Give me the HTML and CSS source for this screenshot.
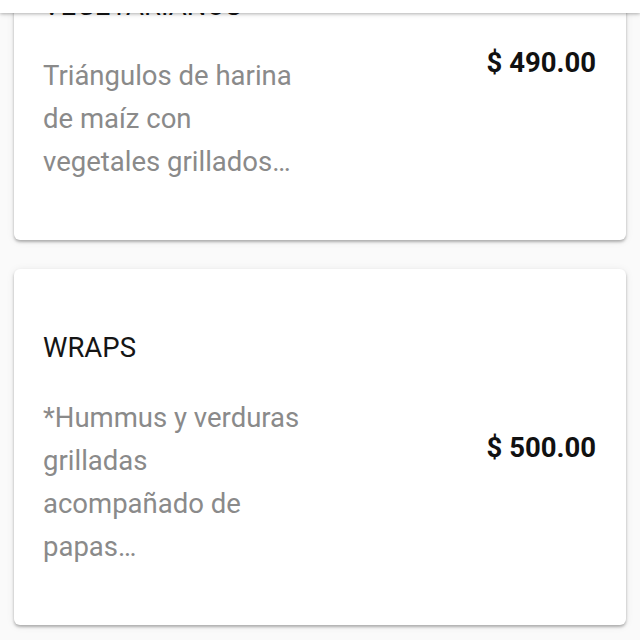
FILE: index.html
```html
<!DOCTYPE html>
<html lang="es">
<head>
    <meta charset="UTF-8">
    <meta name="viewport" content="width=device-width, initial-scale=1.0">
    <title>Menú</title>
    <link rel="stylesheet" href="styles.css">
</head>
<body>
    <!-- barra superior (solo se ve el borde inferior) -->
    <div class="app-bar"></div>

    <div class="menu-list">
        <div class="menu-card">
            <div class="menu-info">
                <div class="menu-title">NACHOS VEGETARIANOS</div>
                <div class="menu-desc">Triángulos de harina de maíz con vegetales grillados…</div>
            </div>
            <div class="menu-price">$ 490.00</div>
        </div>

        <div class="menu-card">
            <div class="menu-info">
                <div class="menu-title">WRAPS</div>
                <div class="menu-desc">*Hummus y verduras grilladas acompañado de papas…</div>
            </div>
            <div class="menu-price">$ 500.00</div>
        </div>
    </div>
</body>
</html>
```

FILE: styles.css
```css
/* reset */
html, body {
    margin: 0;
    padding: 0;
    width: 100%;
    height: 100%;
    overflow: hidden;
    box-sizing: border-box;
}

body {
    background-color: #fafafa;
    font-family: Roboto, "Noto Sans", "Liberation Sans", sans-serif;
}

/* barra fija arriba */
.app-bar {
    position: fixed;
    top: 0;
    left: 0;
    right: 0;
    height: 13px;
    background: #fff;
    box-shadow: 0 1px 3px rgba(0, 0, 0, 0.25), 0 2px 6px rgba(0, 0, 0, 0.08);
    z-index: 10;
}

/* lista desplazada (scroll) */
.menu-list {
    display: flex;
    flex-direction: column;
    gap: 29px;
    margin-top: -116px;
    padding: 0 14px;
}

.menu-card {
    display: flex;
    align-items: center;
    justify-content: space-between;
    height: 356px;
    padding: 0 30px 0 29px;
    background: #fff;
    border-radius: 6px;
    box-sizing: border-box;
    box-shadow: 0 2px 3px rgba(0, 0, 0, 0.28), 0 1px 8px rgba(0, 0, 0, 0.08);
}

.menu-info {
    width: 268px;
}

.menu-title {
    font-size: 27.5px;
    line-height: 43px;
    color: #151515;
    margin-bottom: 27px;
}

.menu-desc {
    font-size: 27.5px;
    line-height: 43px;
    color: #8a8a8a;
}

.menu-price {
    font-size: 27.5px;
    font-weight: bold;
    color: #111;
}
```
